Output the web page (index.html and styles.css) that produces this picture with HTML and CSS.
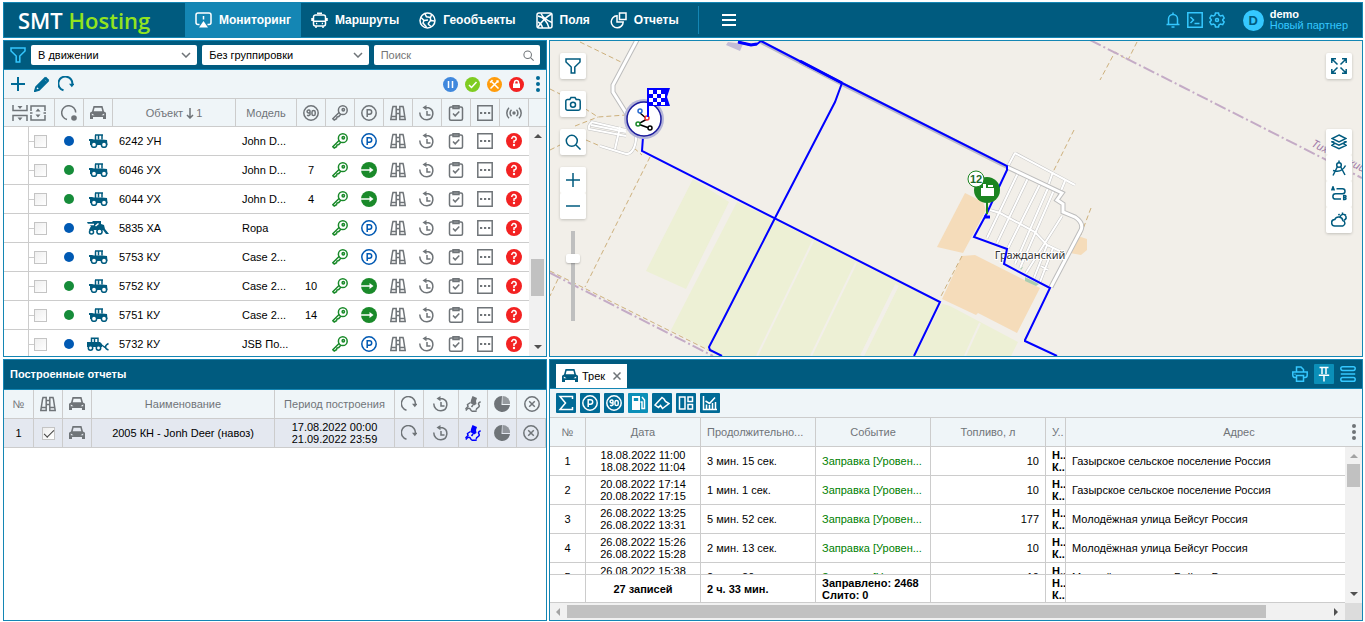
FILE: index.html
```html
<!DOCTYPE html>
<html lang="ru">
<head>
  <meta charset="UTF-8">
  <meta name="viewport" content="width=device-width, initial-scale=1.0">
  <title>SMT Hosting - Мониторинг</title>
  <link rel="stylesheet" href="styles.css">
</head>
<body>
  <svg class="sprite" aria-hidden="true">
    <symbol id="i-monitor" viewBox="0 0 17 17"><path d="M4.500 12.500H3a2 2 0 0 1-2-2V3a2 2 0 0 1 2-2h11a2 2 0 0 1 2 2v7.500a2 2 0 0 1-2 2h-1.500M8.500 4v3.500"/><path class="fill" d="M8.500 9l4.500 6.500H4z"/></symbol>
    <symbol id="i-bus" viewBox="0 0 17 17"><path d="M6 1.200h5M4.500 3h8a2 2 0 0 1 2 2v7a2 2 0 0 1-2 2h-8a2 2 0 0 1-2-2V5a2 2 0 0 1 2-2zM2.500 9.200h12M1 6v3M16 6v3M5 14v2M12 14v2M5 11.600h1.200M10.800 11.600H12"/></symbol>
    <symbol id="i-globe" viewBox="0 0 17 17"><circle cx="8.500" cy="8.500" r="7.500"/><path d="M2 5.500l3 3-1 2.500 3.500 4M5 8.500l4-.5M6 1.800l1.500 3 4 .7 1-2.500M9 12l2.500-3.500 4 .5M11 5.500l1 3M9 12l3 2.500"/></symbol>
    <symbol id="i-field" viewBox="0 0 17 17"><rect x="1" y="1" width="15" height="15" rx="2"/><path d="M2 4c6 1 9 5 11 12M15.500 2C10 5 6 9 2 15M5 1.500c2 4 6 7 11 9M2 10c2 1 4 3 4.500 6"/></symbol>
    <symbol id="i-report" viewBox="0 0 17 17"><path d="M7 3.800A6 6 0 1 0 13.200 10H7z"/><path d="M9.500 1h6.500v6.500H9.500z"/></symbol>
    <symbol id="i-menu" viewBox="0 0 14 14"><path d="M0 2h14M0 7h14M0 12h14"/></symbol>
    <symbol id="i-bell" viewBox="0 0 16 16"><path d="M8 .5v2M1.500 12.500h13M3.500 12.500V7a4.500 4.500 0 0 1 9 0v5.500M6.500 15h3"/></symbol>
    <symbol id="i-term" viewBox="0 0 16 16"><path d="M.8.800h14.400v14.400H.8zM3.500 5l3 3-3 3M7.500 11.500h5"/></symbol>
    <symbol id="i-gear" viewBox="0 0 16 16"><path d="M6.500 1h3l.5 2 1.500 1 2.200-.6 1.500 2.600L13.800 7.500v1l1.400 1.500-1.500 2.600-2.200-.6-1.500 1-.5 2h-3l-.5-2-1.500-1-2.200.6L.8 10l1.400-1.500v-1L.8 6l1.500-2.600 2.200.6 1.500-1z"/><circle cx="8" cy="8" r="1.500"/></symbol>
    <symbol id="i-funnel" viewBox="0 0 16 16"><path d="M1 1h14v3L9.800 9v6H6.200V9L1 4z"/></symbol>
    <symbol id="i-search" viewBox="0 0 16 16"><circle cx="6.800" cy="6.800" r="5.500"/><path d="M11 11l4.500 4.500"/></symbol>
    <symbol id="i-chevron" viewBox="0 0 10 6"><path d="M1 1l4 4 4-4"/></symbol>
    <symbol id="i-plus" viewBox="0 0 16 16"><path d="M8 1v14M1 8h14"/></symbol>
    <symbol id="i-minus" viewBox="0 0 16 16"><path d="M1 8h14"/></symbol>
    <symbol id="i-pencil" viewBox="0 0 16 16"><path d="M1 15l1.200-4L11 2.200 13.800 5 5 13.800zM4 12l7.500-7.500"/><path class="fill" d="M10.500 2.500L12 .8l3.300 3.300-1.700 1.500zM.5 15.500L1.500 12l2.500 2.500z"/></symbol>
    <symbol id="i-refresh" viewBox="0 0 16 16"><path d="M5.500 14.300A7 7 0 1 1 14.300 8.500"/><path class="fill" d="M11 7.800h5.500l-2.700 3.400z"/></symbol>
    <symbol id="i-pause" viewBox="0 0 15 15"><circle class="disc-blue" cx="7.500" cy="7.500" r="7.500"/><path class="on" d="M5.500 4v7M9.500 4v7"/></symbol>
    <symbol id="i-ok" viewBox="0 0 15 15"><circle class="disc-lime" cx="7.500" cy="7.500" r="7.500"/><path class="on" d="M4 8l2.500 2.500L11.500 5"/></symbol>
    <symbol id="i-tools" viewBox="0 0 15 15"><circle class="disc-orange" cx="7.500" cy="7.500" r="7.500"/><path class="on" d="M4 4l7.500 7.500M11.500 3.500L3.500 11.500M3 5.500L5.500 3M9.500 3.500l2 2"/></symbol>
    <symbol id="i-lock" viewBox="0 0 15 15"><circle class="disc-red" cx="7.500" cy="7.500" r="7.500"/><path class="on" d="M5.500 7V5.500a2 2 0 0 1 4 0V7"/><path class="on-fill" d="M4 6.500h7v4.500H4z"/></symbol>
    <symbol id="i-dots" viewBox="0 0 4 16"><circle class="fill" cx="2" cy="2" r="2"/><circle class="fill" cx="2" cy="8" r="2"/><circle class="fill" cx="2" cy="14" r="2"/></symbol>
    <symbol id="i-collapse" viewBox="0 0 16 16"><path d="M1 0v5.500h14V0M1 16v-5.500h14V16"/><path class="fill" d="M5.500 1h5L8 4zM5.500 12.500h5L8 15.500z"/></symbol>
    <symbol id="i-expand" viewBox="0 0 16 16"><path d="M1 6V1h14v5M1 10v5h14v-5M0 8h2.500M13.500 8H16"/><path class="fill" d="M5.500 6.500h5L8 3.500zM5.500 9.500h5L8 12.500z"/></symbol>
    <symbol id="i-state" viewBox="0 0 16 16"><path d="M6 14.500A7 7 0 1 1 14.700 7.500"/><circle class="fill" cx="13" cy="13" r="2.800"/></symbol>
    <symbol id="i-car" viewBox="0 0 16 14"><path class="fill" fill-rule="evenodd" d="M3.500 0h9l1.500 5.500 2 1.300V13h-3v-2H3v2H0V6.800l2-1.300zM4.600 1.700L3.700 5.300h8.600l-.9-3.600zM1.800 7.500v1.800h2.700zM14.200 7.500v1.800h-2.700z"/></symbol>
    <symbol id="i-90" viewBox="0 0 16 16"><circle cx="8" cy="8" r="7.200"/><path d="M7 7a1.500 1.500 0 1 1 0-1v2.500a1.500 1.500 0 0 1-2.700 1.300M9 7a1.600 1.600 0 0 1 3.200 0v2A1.600 1.600 0 0 1 9 9z"/></symbol>
    <symbol id="i-key" viewBox="0 0 16 16"><circle cx="10.800" cy="5.200" r="4.400"/><circle cx="11.300" cy="4.700" r="1.200"/><path d="M7.300 7.200L.8 13.700 2.200 15l2.300-1.300L5 12l1.800-.5L9 9"/></symbol>
    <symbol id="i-park" viewBox="0 0 16 16"><circle cx="8" cy="8" r="7.200"/><path d="M6.200 12V4.800h2.300a2.200 2.200 0 0 1 0 4.400H6.200"/></symbol>
    <symbol id="i-go" viewBox="0 0 16 16"><circle class="fill" cx="8" cy="8" r="8"/><path class="on" d="M0 8h9"/><path class="on-fill" d="M8.500 5L12.500 8l-4 3z"/></symbol>
    <symbol id="i-bino" viewBox="0 0 16 16"><path d="M2.500 3.500L.8 14.500h5.400V1.500H3zM13.500 3.500l1.700 11H9.800V1.500H13zM6.500 4.500h3M6.500 8.500h3M1.500 11.500h4.500M10 11.500h4.500"/></symbol>
    <symbol id="i-history" viewBox="0 0 16 16"><path d="M.8 7.500a7 7 0 0 0 7.200 7.300A6.200 6.200 0 0 0 9.500 2.700H6M8 6v4h3.500"/><path class="fill" d="M7.500 0v5.200L3.500 2.600z"/></symbol>
    <symbol id="i-clip" viewBox="0 0 16 16"><rect x="1.500" y="2" width="13" height="13.200" rx="1.500"/><path d="M5 .8h6v2.700H5zM5 8.500l2.200 2.300L11.300 6.500"/></symbol>
    <symbol id="i-more" viewBox="0 0 16 16"><path d="M.8.800h14.400v14.400H.8z"/><path class="fill" d="M3 7h2.200v2H3zM7 7h2.200v2H7zM11 7h2.200v2H11z"/></symbol>
    <symbol id="i-signal" viewBox="0 0 16 16"><circle class="fill" cx="8" cy="8" r="1.700"/><path d="M5.500 4.700a4.500 4.500 0 0 0 0 6.600M10.500 4.700a4.500 4.500 0 0 1 0 6.600M3 2.700a7.500 7.500 0 0 0 0 10.600M13 2.700a7.500 7.500 0 0 1 0 10.600"/></symbol>
    <symbol id="i-ask" viewBox="0 0 16 16"><circle class="disc-red" cx="8" cy="8" r="8"/><path class="on" d="M5.800 6A2.200 2.200 0 1 1 8 8v2"/><circle class="on-fill" cx="8" cy="12" r="1.200"/></symbol>
    <symbol id="i-tractor" viewBox="0 0 19 14"><path d="M6.500 6V1.200M6 1h8M9.500 1v4.500M13 1v4.500"/><path class="fill" d="M0 5h3l2 .5h8l5 .5.500 5H1V7H0z"/><circle class="hub" cx="5" cy="10.700" r="2.600"/><circle class="hub" cx="15" cy="10.700" r="2.600"/></symbol>
    <symbol id="i-harvester" viewBox="0 0 22 14"><path class="fill" d="M0 1h5l1-1h8v3l3 1 1 4 4 5h-3l-3-4H2l2-4-3-2z"/><path class="on" d="M1 3.500h6M8.500 5l3-2.500"/><circle class="hub" cx="4.500" cy="11" r="2"/><circle class="hub" cx="12.500" cy="10.500" r="2.600"/></symbol>
    <symbol id="i-loader" viewBox="0 0 22 14"><path d="M4.500 6V1.200H11V6M7.500 1v5M14 7.500l4 3M21.500 6.500c-4 2-4 5 0 6.500"/><path class="fill" d="M0 5h13l2 2v3H0z"/><circle class="hub" cx="3.500" cy="11" r="2.200"/><circle class="hub" cx="11.500" cy="11" r="2.200"/></symbol>
    <symbol id="i-track" viewBox="0 0 16 16"><path d="M.8 14.500c2-3 4-3 5-.5s4 1 6 1M11.500 14c-1-2 3-2 2.800-4s-1.500-1.500-.5-3 1.700-.5 1.700-1.500"/><path class="fill" d="M7.500 0l4.500 2-1 3 .5 3-2.500 1.500L5.500 7l.5-3z"/><path d="M5.500 6.500l-3 2 .5 2L.5 13M8 9l-1.500 2"/></symbol>
    <symbol id="i-pie" viewBox="0 0 16 16"><path class="fill" d="M8 0a8 8 0 1 0 8 9H7.500z"/><path class="soft" d="M8.500 0A7.500 7.500 0 0 1 16 8H8.500z"/></symbol>
    <symbol id="i-close" viewBox="0 0 16 16"><circle cx="8" cy="8" r="7.200"/><path d="M5.200 5.200l5.600 5.600M10.800 5.200l-5.600 5.600"/></symbol>
    <symbol id="i-x" viewBox="0 0 8 8"><path d="M.5.500l7 7M7.500.500l-7 7"/></symbol>
    <symbol id="i-camera" viewBox="0 0 16 16"><path d="M2.500 3.500h2.300L6 1.500h4l1.200 2h2.300a1.700 1.700 0 0 1 1.700 1.700v7.300a1.700 1.700 0 0 1-1.700 1.700h-11a1.700 1.700 0 0 1-1.700-1.700V5.200a1.700 1.700 0 0 1 1.700-1.700z"/><circle cx="8" cy="8.700" r="2.500"/></symbol>
    <symbol id="i-full" viewBox="0 0 16 16"><path d="M.8 5V.8H5M11 .8h4.200V5M15.200 11v4.200H11M5 15.200H.8V11M1 1l5.500 5.500M15 1L9.500 6.500M15 15L9.500 9.500M1 15l5.500-5.500"/></symbol>
    <symbol id="i-layers" viewBox="0 0 16 16"><path d="M8 1l7 3.500L8 8 1 4.500zM3.500 6.300L1 7.800l7 3.400 7-3.400-2.500-1.500M3.500 9.700L1 11.300l7 3.400 7-3.400-2.500-1.600"/></symbol>
    <symbol id="i-compass" viewBox="0 0 16 16"><path d="M8 .5V3M6.500 6.500L2 15.500M9.500 6.500L14 15M2 10.500c5 1.500 10 0 12.500-5"/><circle cx="8" cy="5" r="2.300"/></symbol>
    <symbol id="i-route" viewBox="0 0 16 16"><path d="M5.500 2.800h6a2.500 2.500 0 0 1 0 5h-7a2.600 2.600 0 0 0 0 5.200H10"/><path d="M.6 4.500L2 .8l1.400 3.700M1.200 3.500h1.700M12.700 9.500v4h1.300a1 1 0 0 0 0-2h-1.300H14a1 1 0 0 0 0-2z"/></symbol>
    <symbol id="i-weather" viewBox="0 0 16 16"><path d="M4 14a3.200 3.200 0 0 1-.3-6.400 4.300 4.300 0 0 1 8.200 1A2.800 2.800 0 0 1 11.800 14zM9.200 4.500A3 3 0 1 1 13 8.200M7.500 2l1 1.300M11.500.500V2M15 2.500l-1.300 1M15.800 6.500h-1.500"/></symbol>
    <symbol id="i-print" viewBox="0 0 16 16"><path d="M4.500 6V1h4.500L11.500 3.500V6M4.500 11.500H3a2.200 2.200 0 0 1-2.200-2.200V6h14.400v3.300a2.200 2.200 0 0 1-2.200 2.200h-1.500M4.500 9.500h7v5.700h-7zM2.500 8.300h1"/></symbol>
    <symbol id="i-pin" viewBox="0 0 16 16"><path d="M3.500 1.500h9M6 2v6M10 2v6M8 9v6.500M2.800 9.200h10.400"/></symbol>
    <symbol id="i-stack" viewBox="0 0 16 16"><rect x=".8" y=".8" width="14.400" height="3.600" rx="1.800"/><path d="M.8 8h14.400"/><rect x=".8" y="11.600" width="14.400" height="3.600" rx="1.800"/></symbol>
    <symbol id="i-sum" viewBox="0 0 16 16"><path d="M14.500 4V1.500H2L7.500 8 2 14.500h12.500V12"/></symbol>
    <symbol id="i-fuel" viewBox="0 0 16 16"><path class="on-fill" fill-rule="evenodd" d="M2 1h8v14H2zM3.800 3v3h4.400V3z"/><path d="M10.500 7h1.500v6.500h2.500V5L12 2"/></symbol>
    <symbol id="i-area" viewBox="0 0 16 16"><path d="M1 10l7-7.500 2 1.500 1.500 2.500L15 8.500l-6.500 5-2-3-2 2z"/></symbol>
    <symbol id="i-panes" viewBox="0 0 16 16"><path d="M1.500 2h5.500v12H1.500zM10 2h4.500v4.500H10zM10 9.500h4.500V14H10z"/></symbol>
    <symbol id="i-chart" viewBox="0 0 16 16"><path d="M1.500 1v13.500H15M4.500 14V9.500M7.500 14v-4M10.500 14V8M13.500 14V7M3.500 6l4 2.500L13 2.500"/></symbol>
    <symbol id="i-sort" viewBox="0 0 8 11"><path d="M4 0v10M1 7l3 3 3-3"/></symbol>
  </svg>

  <header class="topbar">
    <a class="logo" href="#">SMT <span>Hosting</span></a>
    <nav class="nav">
      <a class="active" href="#"><svg><use href="#i-monitor"/></svg>Мониторинг</a>
      <a href="#"><svg><use href="#i-bus"/></svg>Маршруты</a>
      <a href="#"><svg><use href="#i-globe"/></svg>Геообъекты</a>
      <a href="#"><svg><use href="#i-field"/></svg>Поля</a>
      <a href="#"><svg><use href="#i-report"/></svg>Отчеты</a>
    </nav>
    <button class="menu" type="button" aria-label="Меню"><svg><use href="#i-menu"/></svg></button>
    <div class="account">
      <button type="button" aria-label="Уведомления"><svg><use href="#i-bell"/></svg></button>
      <button type="button" aria-label="Консоль"><svg><use href="#i-term"/></svg></button>
      <button type="button" aria-label="Настройки"><svg><use href="#i-gear"/></svg></button>
      <span class="avatar">D</span>
      <div class="user"><b>demo</b><a href="#">Новый партнер</a></div>
    </div>
  </header>

  <main class="layout">
    <section class="panel">
      <div class="filters">
        <svg class="icon"><use href="#i-funnel"/></svg>
        <label class="field">
          <select aria-label="Фильтр"><option>В движении</option></select>
          <svg class="chevron"><use href="#i-chevron"/></svg>
        </label>
        <label class="field">
          <select aria-label="Группировка"><option>Без группировки</option></select>
          <svg class="chevron"><use href="#i-chevron"/></svg>
        </label>
        <label class="field">
          <input type="text" placeholder="Поиск" aria-label="Поиск">
          <svg class="lens"><use href="#i-search"/></svg>
        </label>
      </div>
      <div class="tools">
        <button type="button" aria-label="Добавить"><svg class="icon"><use href="#i-plus"/></svg></button>
        <button type="button" aria-label="Изменить"><svg class="icon"><use href="#i-pencil"/></svg></button>
        <button type="button" aria-label="Обновить"><svg class="icon"><use href="#i-refresh"/></svg></button>
        <div class="states">
          <button type="button" aria-label="Пауза"><svg><use href="#i-pause"/></svg></button>
          <button type="button" aria-label="В работе"><svg><use href="#i-ok"/></svg></button>
          <button type="button" aria-label="Ремонт"><svg><use href="#i-tools"/></svg></button>
          <button type="button" aria-label="Заблокированы"><svg><use href="#i-lock"/></svg></button>
        </div>
        <button type="button" aria-label="Ещё"><svg class="dots"><use href="#i-dots"/></svg></button>
      </div>
      <table class="grid objects-head">
        <thead>
          <tr>
            <th class="w-tree"><div class="pair"><svg class="icon"><use href="#i-collapse"/></svg><svg class="icon"><use href="#i-expand"/></svg></div></th>
            <th class="w-icon"><svg class="icon"><use href="#i-state"/></svg></th>
            <th class="w-icon"><svg class="car"><use href="#i-car"/></svg></th>
            <th>Объект <svg class="sort"><use href="#i-sort"/></svg>1</th>
            <th class="w-model">Модель</th>
            <th class="w-icon"><svg class="icon"><use href="#i-90"/></svg></th>
            <th class="w-icon"><svg class="icon"><use href="#i-key"/></svg></th>
            <th class="w-icon"><svg class="icon"><use href="#i-park"/></svg></th>
            <th class="w-icon"><svg class="icon"><use href="#i-bino"/></svg></th>
            <th class="w-icon"><svg class="icon"><use href="#i-history"/></svg></th>
            <th class="w-icon"><svg class="icon"><use href="#i-clip"/></svg></th>
            <th class="w-icon"><svg class="icon"><use href="#i-more"/></svg></th>
            <th class="w-icon"><svg class="icon"><use href="#i-signal"/></svg></th>
            <th class="w-scroll"></th>
          </tr>
        </thead>
      </table>
      <div class="scroll-area">
        <div class="view">
          <table class="grid objects">
            <colgroup>
              <col class="w-tree"><col class="w-icon"><col class="w-icon"><col><col class="w-model">
              <col class="w-icon"><col class="w-icon"><col class="w-icon"><col class="w-icon">
              <col class="w-icon"><col class="w-icon"><col class="w-icon"><col class="w-icon">
            </colgroup>
            <tbody id="objects"></tbody>
          </table>
        </div>
        <div class="vscroll"><i class="up"></i><div class="rail"><div class="thumb thumb-objects"></div></div><i class="down"></i></div>
      </div>
    </section>

    <section class="panel map">
      <svg class="canvas" viewBox="0 1 812 315" preserveAspectRatio="xMinYMin slice">
        <!-- fields -->
        <g class="green">
          <path d="M143 139L179 162 136 249 96 231z"/>
          <path d="M187 162L225 180 390 263 400 266 468 302 461 316H166L157 309 121 290z"/>
        </g>
        <path class="gap" d="M263 201L207 316M306 223L261 316M392 262L364 316M430 283L415 316"/>
        <path class="gap wide" d="M347 245L312 316"/>
        <g class="orange">
          <path d="M415 153L433 162 436 170 413 213 387 207z"/>
          <path d="M412 216L425 215 490 248 467 293 428 273 426 275 392 259z"/>
          <path d="M528 196L537 199V210L531 215 520 213z"/>
        </g>
        <path class="park" d="M475 237L489 244 486 246 475 241zM469 226l4 1-2 3z"/>
        <path class="depot" d="M178 2L193 4 190 11 176 5z"/>
        <!-- dirt roads and district border -->
        <path class="dirt" d="M30 2L73 23M0 49L20 59 48 77 76 75M25 86L48 77M36 100L50 106M100 117L35 247M8 239L0 256M0 110L30 95M84 108L92 115M587 2L578 20 565 12 550 40M524 90L503 132M541 168L530 197M412 216L390 258M0 231L162 312"/>
        <path class="border" d="M540 0L812 138M0 233L163 316"/>
        <!-- roads -->
        <path class="casing" d="M87 0L63 45V52L78 76"/>
        <path class="surface" d="M87 0L63 45V52L78 76"/>
        <path class="casing thin" d="M76 90L42 82Q38 85 39 89L76 96M41 85L76 92M70 87L65 109M50 106L76 114Q84 114 86 100V90M465 113L525 145M465 113L457 128M503 132L498 146M515 141L508 158M468 133L437 198M478 138L447 203M490 144L458 208M498 148L465 224M504 150L470 228M512 176L476 233M440 170L450 173 485 192 497 205 514 213M497 205L484 238M491 226L498 230M503 208L490 242"/>
        <path class="surface thin" d="M76 90L42 82Q38 85 39 89L76 96M41 85L76 92M70 87L65 109M50 106L76 114Q84 114 86 100V90M465 113L525 145M465 113L457 128M503 132L498 146M515 141L508 158M468 133L437 198M478 138L447 203M490 144L458 208M498 148L465 224M504 150L470 228M512 176L476 233M440 170L450 173 485 192 497 205 514 213M497 205L484 238M491 226L498 230M503 208L490 242"/>
        <path class="casing" d="M457 127L512 153 507 160 513 164V172L525 177Q534 183 531 190L501 247"/>
        <path class="surface" d="M457 127L512 153 507 160 513 164V172L525 177Q534 183 531 190L501 247"/>
        <text class="town" x="480" y="219">Гражданский</text>
        <text class="district" transform="translate(761 106) rotate(27)">Тихорецкий,</text>
        <!-- vehicle track -->
        <path class="shadow" d="M211 2L292 44 457 127"/>
        <path class="way" d="M93 97L92 111 390 262 364 316M292 43L285 62 225 178 173 280 159 307 160 310 172 316"/>
        <path class="way" d="M188 2L201 5 207 4 211 1 292 43 457 126V130L449 147 437 173 424 197 457 209 454 224 500 248 475 300V301L507 316"/>
        <path class="way heavy" d="M250 21L292 43M188 2L201 5 207 4"/>
        <!-- start / finish -->
        <circle class="halo" cx="94" cy="79" r="20"/>
        <circle class="node" cx="94" cy="79" r="17"/>
        <path class="links" d="M90 73L97 79 88 84 99 88"/>
        <circle class="dot-blue" cx="90" cy="71" r="2"/><circle class="dot-red" cx="97" cy="78" r="2"/><circle class="dot-green" cx="88" cy="84" r="2"/><circle class="dot-black" cx="100" cy="88" r="2"/>
        <path class="flag" d="M97 48h23l-3 9 3 9H99v11h-2z"/>
        <path class="checks" d="M99 50h4v4h-4zM107 50h4v4h-4zM103 54h4v4h-4zM111 54h4v4h-4zM99 58h4v4h-4zM107 58h4v4h-4zM103 62h4v3h-4zM111 62h4v3h-4z"/>
        <!-- fuel stop -->
        <path class="way heavy" d="M434 177h6"/>
        <path class="stem" d="M437 160v14"/>
        <circle class="stop" cx="437" cy="150" r="13"/>
        <path class="on-fill" d="M431 148h13v8h-13zM433 144h3v4h-3zM438 145h5v2h-5z"/>
        <circle class="badge" cx="426" cy="139" r="8"/>
        <text class="badge-text" x="426" y="143">12</text>
      </svg>
      <div class="map-left">
        <button type="button" aria-label="Фильтр"><svg><use href="#i-funnel"/></svg></button>
        <button type="button" aria-label="Снимок"><svg><use href="#i-camera"/></svg></button>
        <button type="button" aria-label="Поиск на карте"><svg><use href="#i-search"/></svg></button>
        <div class="stacked">
          <button type="button" aria-label="Приблизить"><svg><use href="#i-plus"/></svg></button>
          <button type="button" aria-label="Отдалить"><svg><use href="#i-minus"/></svg></button>
        </div>
        <input class="zoom" type="range" min="0" max="100" value="72" aria-label="Масштаб">
      </div>
      <div class="map-right">
        <button type="button" aria-label="На весь экран"><svg><use href="#i-full"/></svg></button>
        <div class="stacked">
          <button type="button" aria-label="Слои"><svg><use href="#i-layers"/></svg></button>
          <button type="button" aria-label="Измерения"><svg><use href="#i-compass"/></svg></button>
          <button type="button" aria-label="Маршрут"><svg><use href="#i-route"/></svg></button>
          <button type="button" aria-label="Погода"><svg><use href="#i-weather"/></svg></button>
        </div>
      </div>
    </section>

    <section class="panel">
      <h2 class="title">Построенные отчеты</h2>
      <table class="grid reports">
        <thead>
          <tr>
            <th class="w-num">№</th>
            <th class="w-icon"><svg class="icon"><use href="#i-bino"/></svg></th>
            <th class="w-icon"><svg class="car"><use href="#i-car"/></svg></th>
            <th>Наименование</th>
            <th class="w-period">Период построения</th>
            <th class="w-icon"><svg class="icon"><use href="#i-refresh"/></svg></th>
            <th class="w-hist"><svg class="icon"><use href="#i-history"/></svg></th>
            <th class="w-icon"><svg class="icon"><use href="#i-track"/></svg></th>
            <th class="w-icon"><svg class="icon"><use href="#i-pie"/></svg></th>
            <th class="w-icon"><svg class="icon"><use href="#i-close"/></svg></th>
          </tr>
        </thead>
        <tbody>
          <tr>
            <td>1</td>
            <td><input class="check" type="checkbox" checked aria-label="Показать отчет"></td>
            <td><svg class="car"><use href="#i-car"/></svg></td>
            <td>2005 КН - Jonh Deer (навоз)</td>
            <td>17.08.2022 00:00<br>21.09.2022 23:59</td>
            <td><svg class="icon"><use href="#i-refresh"/></svg></td>
            <td><svg class="icon"><use href="#i-history"/></svg></td>
            <td><svg class="icon bright"><use href="#i-track"/></svg></td>
            <td><svg class="icon"><use href="#i-pie"/></svg></td>
            <td><svg class="icon"><use href="#i-close"/></svg></td>
          </tr>
        </tbody>
      </table>
    </section>

    <section class="panel">
      <div class="tabs">
        <div class="tab"><svg class="car"><use href="#i-car"/></svg><span>Трек</span><button type="button" aria-label="Закрыть"><svg><use href="#i-x"/></svg></button></div>
        <div class="tab-tools">
          <button type="button" aria-label="Печать"><svg class="icon"><use href="#i-print"/></svg></button>
          <button class="pressed" type="button" aria-label="Закрепить"><svg class="icon"><use href="#i-pin"/></svg></button>
          <button type="button" aria-label="Вид"><svg class="icon"><use href="#i-stack"/></svg></button>
        </div>
      </div>
      <div class="track-tools">
        <button type="button" aria-label="Итоги"><svg class="icon"><use href="#i-sum"/></svg></button>
        <button type="button" aria-label="Стоянки"><svg class="icon"><use href="#i-park"/></svg></button>
        <button type="button" aria-label="Скорость"><svg class="icon"><use href="#i-90"/></svg></button>
        <button class="pressed" type="button" aria-label="Топливо"><svg class="icon"><use href="#i-fuel"/></svg></button>
        <button type="button" aria-label="Геообъекты"><svg class="icon"><use href="#i-area"/></svg></button>
        <button type="button" aria-label="Панели"><svg class="icon"><use href="#i-panes"/></svg></button>
        <button type="button" aria-label="Графики"><svg class="icon"><use href="#i-chart"/></svg></button>
      </div>
      <table class="grid track-head">
        <thead>
          <tr>
            <th class="w-no">№</th><th class="w-col">Дата</th><th class="w-col cut">Продолжительно...</th><th class="w-col">Событие</th><th class="w-col">Топливо, л</th><th class="w-place">У..</th>
            <th class="address">Адрес<svg class="dots"><use href="#i-dots"/></svg></th>
          </tr>
        </thead>
      </table>
      <div class="scroll-area">
        <div class="stack">
          <div class="view">
            <table class="grid track">
              <colgroup><col class="w-no"><col class="w-col"><col class="w-col"><col class="w-col"><col class="w-col"><col class="w-place"><col></colgroup>
              <tbody id="events"></tbody>
            </table>
          </div>
          <table class="grid track summary">
            <colgroup><col class="w-no"><col class="w-col"><col class="w-col"><col class="w-col"><col class="w-col"><col class="w-place"><col></colgroup>
            <tbody>
              <tr><td></td><td>27 записей</td><td>2 ч. 33 мин.</td><td>Заправлено: 2468<br>Слито: 0</td><td></td><td>Н..<br>К..</td><td></td></tr>
            </tbody>
          </table>
        </div>
        <div class="vscroll"><i class="up off"></i><div class="rail"><div class="thumb thumb-events"></div></div><i class="down"></i></div>
      </div>
      <div class="hscroll"><i class="left"></i><div class="rail"><div class="thumb"></div></div><i class="right"></i><span class="corner"></span></div>
    </section>
  </main>

  <script>
    // [name, model, speed, moving, vehicle icon]
    const objects = [
      ['6242 УН', 'John D...', '', false, 'tractor'],
      ['6046 УХ', 'John D...', 7, true, 'tractor'],
      ['6044 УХ', 'John D...', 4, true, 'tractor'],
      ['5835 ХА', 'Ropa', '', false, 'harvester'],
      ['5753 КУ', 'Case 2...', '', false, 'tractor'],
      ['5752 КУ', 'Case 2...', 10, true, 'tractor'],
      ['5751 КУ', 'Case 2...', 14, true, 'tractor'],
      ['5732 КУ', 'JSB По...', '', false, 'loader']
    ];

    const events = [
      ['18.08.2022 11:00', '18.08.2022 11:04', '3 мин. 15 сек.', 10, 'Газырское сельское поселение Россия'],
      ['20.08.2022 17:14', '20.08.2022 17:15', '1 мин. 1 сек.', 10, 'Газырское сельское поселение Россия'],
      ['26.08.2022 13:25', '26.08.2022 13:31', '5 мин. 52 сек.', 177, 'Молодёжная улица Бейсуг Россия'],
      ['26.08.2022 15:26', '26.08.2022 15:28', '2 мин. 13 сек.', 10, 'Молодёжная улица Бейсуг Россия'],
      ['26.08.2022 15:38', '26.08.2022 15:40', '2 мин. 20 сек.', 10, 'Молодёжная улица Бейсуг Россия']
    ];

    const icon = (name, cls = '') => `<svg class="icon ${cls}"><use href="#i-${name}"/></svg>`;

    document.getElementById('objects').innerHTML = objects.map(([name, model, speed, moving, kind]) => `
      <tr>
        <td class="tree"><input class="check" type="checkbox" aria-label="${name}"></td>
        <td><span class="state ${moving ? 'moving' : ''}"></span></td>
        <td>${icon(kind, 'vehicle ' + kind)}</td>
        <td>${name}</td>
        <td>${model}</td>
        <td class="center">${speed}</td>
        <td>${icon('key', 'key')}</td>
        <td>${moving ? icon('go', 'go') : icon('park', 'park-on')}</td>
        <td>${icon('bino')}</td>
        <td>${icon('history')}</td>
        <td>${icon('clip')}</td>
        <td>${icon('more')}</td>
        <td>${icon('ask')}</td>
      </tr>`).join('');

    document.getElementById('events').innerHTML = events.map(([from, to, time, fuel, address], i) => `
      <tr>
        <td>${i + 1}</td>
        <td>${from}<br>${to}</td>
        <td>${time}</td>
        <td><span class="refuel">Заправка [Уровен...</span></td>
        <td>${fuel}</td>
        <td>Н..<br>К..</td>
        <td>${address}</td>
      </tr>`).join('');
  </script>
</body>
</html>
```
FILE: styles.css
```css
* {
  box-sizing: border-box;
}
html, body {
  height: 100%;
}
body {
  margin: 0;
  padding: 2px 2px 1px 3px;
  display: flex;
  flex-direction: column;
  gap: 2px;
  background: #fff;
  color: #000;
  font: 11px/12px "Liberation Sans", Arial, sans-serif;
}
button {
  display: block;
  padding: 0;
  border: 0;
  background: none;
  color: inherit;
  cursor: pointer;
}
a {
  color: inherit;
  text-decoration: none;
}

/* icons */
.sprite {
  position: absolute;
  width: 0;
  height: 0;
}
svg {
  display: block;
  flex: none;
  fill: none;
  stroke: currentColor;
  stroke-width: 1.5;
}
.icon {
  width: 16px;
  height: 16px;
}
.fill {
  fill: currentColor;
  stroke: none;
}
.soft {
  fill: currentColor;
  opacity: .7;
  stroke: none;
}
.on {
  stroke: #fff;
}
.on-fill {
  fill: #fff;
  stroke: none;
}
.hub {
  fill: #fff;
  stroke: currentColor;
}
.disc-blue {
  fill: #4088dd;
  stroke: none;
}
.disc-lime {
  fill: #7fcc22;
  stroke: none;
}
.disc-orange {
  fill: #ff9c0c;
  stroke: none;
}
.disc-red {
  fill: #f32222;
  stroke: none;
}
.car {
  width: 16px;
  height: 14px;
}
.dots {
  width: 4px;
  height: 16px;
}

/* top bar */
.topbar {
  flex: none;
  height: 36px;
  display: flex;
  align-items: stretch;
  background: #005b7f;
  border: 1px solid #1486b4;
  color: #fff;
}
.logo {
  width: 181px;
  padding-left: 14px;
  font: 600 22px/35px "Open Sans", "Noto Sans", sans-serif;
  white-space: nowrap;
}
.logo span {
  color: #92e41e;
}
.nav {
  display: flex;
  font-size: 12px;
  font-weight: bold;
}
.nav a {
  display: flex;
  align-items: center;
  gap: 7px;
  padding: 0 10px;
}
.nav svg {
  width: 17px;
  height: 17px;
}
.nav .active {
  background: #1486b4;
}
.menu {
  margin: 3px 0 3px 9px;
  padding-left: 23px;
  border-left: 1px solid #1486b4;
}
.menu svg {
  width: 14px;
  height: 14px;
  stroke-width: 2;
}
.account {
  margin-left: auto;
  padding-right: 14px;
  display: flex;
  align-items: center;
  gap: 6px;
  color: #35c8ff;
}
.account svg {
  width: 16px;
  height: 16px;
}
.avatar {
  width: 21px;
  height: 21px;
  margin-left: 12px;
  border-radius: 50%;
  background: #35c8ff;
  color: #005b7f;
  font: bold 13px/21px "Liberation Sans", Arial, sans-serif;
  text-align: center;
}
.user {
  line-height: 11px;
}
.user b {
  display: block;
  color: #fff;
}

.layout {
  flex: 1;
  min-height: 0;
  display: grid;
  grid-template-columns: 40% minmax(0, 1fr);
  grid-template-rows: minmax(0, 1fr) 262px;
  gap: 2px;
}
.panel {
  display: flex;
  flex-direction: column;
  min-width: 0;
  min-height: 0;
  overflow: hidden;
  border: 1px solid #1486b4;
}

/* filters over the object list */
.filters {
  flex: none;
  height: 29px;
  padding: 0 6px;
  display: flex;
  align-items: center;
  gap: 5px;
  background: #005b7f;
  border-bottom: 1px solid #1486b4;
}
.filters > .icon {
  color: #35c8ff;
}
.field {
  position: relative;
  flex: 1;
}
.field select, .field input {
  display: block;
  width: 100%;
  height: 20px;
  padding: 0 7px;
  border: 0;
  border-radius: 2px;
  background: #fff;
  color: #000;
  font: inherit;
  appearance: none;
}
.field input::placeholder {
  color: #757575;
}
.field svg {
  position: absolute;
  right: 6px;
  color: #6f7478;
  pointer-events: none;
}
.chevron {
  top: 7px;
  width: 10px;
  height: 6px;
}
.lens {
  top: 5px;
  width: 11px;
  height: 11px;
}
.tools {
  flex: none;
  height: 29px;
  padding: 0 6px;
  display: flex;
  align-items: center;
  gap: 8px;
  background: #eff5f8;
  border-bottom: 1px solid #ccc;
  color: #006a96;
}
.tools .icon {
  stroke-width: 2;
}
.states {
  display: flex;
  gap: 7px;
  margin-left: auto;
}
.states svg {
  width: 15px;
  height: 15px;
}
.states + button {
  margin-left: 4px;
}

/* tables */
.grid {
  flex: none;
  width: 100%;
  table-layout: fixed;
  border-collapse: separate;
  border-spacing: 0;
}
.grid th, .grid td {
  height: 29px;
  padding: 0 6px;
  border-bottom: 1px solid #ccc;
  white-space: nowrap;
  overflow: hidden;
}
.grid th {
  padding: 0;
  border-right: 1px solid #ccc;
  background: #eff5f8;
  color: #6f7478;
  font-weight: normal;
  text-align: center;
}
.grid th:last-child {
  border-right: 0;
}
.grid svg {
  margin: 0 auto;
  color: #6f7478;
}
.w-tree { width: 51px; }
.w-icon { width: 29px; }
.w-model { width: 61px; }
.w-scroll { width: 17px; }
.w-num { width: 30px; }
.w-period { width: 120px; }
.w-hist { width: 35px; }
.w-no { width: 36px; }
.w-col { width: 115px; }
.w-place { width: 20px; }

.objects-head th {
  height: 28px;
}
.pair {
  display: flex;
  justify-content: center;
  gap: 2px;
}
.grid .pair svg {
  margin: 0;
}
.grid .sort {
  display: inline-block;
  width: 8px;
  height: 11px;
  margin-right: 2px;
  vertical-align: -2px;
}
.objects td:has(svg), .objects .center, .objects td:nth-child(2) {
  padding: 0 1px 0 0;
  text-align: center;
}
.objects .tree {
  padding: 0 0 0 30px;
  background: linear-gradient(#ccc, #ccc) 24px 0 / 1px 100% no-repeat, linear-gradient(#ccc, #ccc) 24px 14px / 6px 1px no-repeat;
}
.check {
  display: block;
  width: 13px;
  height: 13px;
  margin: 0;
  appearance: none;
  border: 1px solid #c4c4c4;
  background: linear-gradient(135deg, #eee, #fff);
}
.check:checked::after {
  content: "";
  display: block;
  width: 9px;
  height: 4px;
  margin: 2px 1px;
  border: solid #444;
  border-width: 0 0 1px 1px;
  transform: rotate(-45deg);
}
.state {
  display: block;
  width: 10px;
  height: 10px;
  margin: 0 auto;
  border-radius: 50%;
  background: #0059b3;
}
.state.moving {
  background: #168c3a;
}
.grid .vehicle {
  width: 19px;
  height: 14px;
  color: #005b7f;
}
.grid .harvester, .grid .loader {
  width: 22px;
}
.grid .key, .grid .go {
  color: #1a8a2a;
}
.grid .park-on {
  color: #0059b3;
}
.scroll-area {
  flex: 1;
  min-height: 0;
  display: flex;
}
.view {
  flex: 1;
  min-height: 0;
  overflow: hidden;
}

/* scrollbars */
.vscroll {
  flex: none;
  width: 17px;
  display: flex;
  flex-direction: column;
  align-items: center;
  padding: 7px 0;
  gap: 6px;
  background: #f1f1f1;
}
.vscroll i, .hscroll i {
  border: 4px solid transparent;
}
.vscroll .up {
  border-top: 0;
  border-bottom-color: #505050;
}
.vscroll .down {
  border-bottom: 0;
  border-top-color: #505050;
}
.vscroll .off {
  border-bottom-color: #a3a3a3;
}
.rail {
  flex: 1;
}
.thumb {
  background: #c1c1c1;
}
.vscroll .thumb {
  width: 13px;
}
.vscroll .rail {
  display: flex;
  flex-direction: column;
}
.thumb-objects {
  flex: 0 0 19%;
  margin-top: auto;
}
.thumb-objects::after {
  content: "";
}
.rail:has(.thumb-objects)::after {
  content: "";
  flex: 0 0 22%;
}
.thumb-events {
  flex: 0 0 19%;
}
.hscroll {
  flex: none;
  height: 17px;
  display: flex;
  align-items: center;
  gap: 7px;
  padding-left: 6px;
  background: #f1f1f1;
}
.hscroll .left {
  border-left: 0;
  border-right-color: #a3a3a3;
}
.hscroll .right {
  border-right: 0;
  border-left-color: #505050;
}
.hscroll .thumb {
  width: 92%;
  height: 13px;
}
.corner {
  width: 17px;
  height: 17px;
  background: #dcdcdc;
}

/* map */
.map {
  position: relative;
  background: #f2efe9;
}
.canvas {
  width: 100%;
  height: 100%;
  stroke: none;
}
.green {
  fill: #edf0d5;
}
.orange {
  fill: #f5dcba;
}
.park {
  fill: #aaccb0;
}
.depot {
  fill: #c3bcd6;
}
.gap {
  stroke: #f2efe9;
  stroke-width: 2;
}
.gap.wide {
  stroke-width: 4;
}
.dirt {
  stroke: #cdb07c;
  stroke-width: 1;
  stroke-dasharray: 5 3;
}
.border {
  stroke: #c4abc6;
  stroke-width: 2;
  stroke-dasharray: 12 3 2 3;
}
.casing {
  stroke: #bdbdbd;
  stroke-width: 5;
}
.surface {
  stroke: #fff;
  stroke-width: 3;
}
.casing.thin {
  stroke: #c4c4c4;
  stroke-width: 3;
}
.surface.thin {
  stroke-width: 2;
}
.town {
  fill: #333;
  stroke: #fff;
  stroke-width: 2;
  paint-order: stroke;
  font: 11px "Noto Sans", sans-serif;
  text-anchor: middle;
}
.district {
  fill: #a07aa8;
  font: italic 11px "Noto Sans", sans-serif;
}
.shadow {
  stroke: #b9b9c9;
  stroke-width: 4;
}
.way {
  stroke: #00f;
  stroke-width: 2;
}
.way.heavy {
  stroke-width: 3;
}
.halo {
  fill: #b5b5d8;
}
.node {
  fill: #fff;
  stroke: #1b1b9c;
  stroke-width: 1.5;
}
.links {
  stroke: #000;
  stroke-width: 1.5;
}
.dot-blue {
  fill: #fff;
  stroke: #2a6cd0;
}
.dot-red {
  fill: #fff;
  stroke: #e33;
}
.dot-green {
  fill: #fff;
  stroke: #1a8a2a;
}
.dot-black {
  fill: #fff;
  stroke: #000;
}
.flag {
  fill: #00f;
}
.checks {
  fill: #fff;
}
.stem {
  stroke: #1b8420;
  stroke-width: 2;
}
.stop {
  fill: #1b8420;
}
.badge {
  fill: #fff;
  stroke: #1b8420;
  stroke-width: 1;
}
.badge-text {
  fill: #1b6a2a;
  font: bold 11px "Liberation Sans", Arial, sans-serif;
  text-anchor: middle;
}
.map-left, .map-right {
  position: absolute;
  top: 12px;
  display: flex;
  flex-direction: column;
  align-items: center;
  gap: 12px;
  color: #005b7f;
}
.map-left {
  left: 10px;
}
.map-right {
  right: 10px;
  gap: 50px;
}
.map button {
  width: 26px;
  height: 26px;
  padding: 5px;
  border-radius: 2px;
  background: #fff;
}
.map button svg {
  width: 16px;
  height: 16px;
}
.map-left > button, .map-right > button, .stacked {
  border-radius: 2px;
  box-shadow: 0 1px 3px rgba(0, 0, 0, .2);
}
.zoom {
  width: 14px;
  height: 90px;
  margin: 0;
  appearance: none;
  writing-mode: vertical-lr;
  direction: rtl;
  background: linear-gradient(#bfbfbf, #bfbfbf) center / 4px 100% no-repeat;
}
.zoom::-webkit-slider-thumb {
  appearance: none;
  width: 14px;
  height: 9px;
  border-radius: 2px;
  background: #fff;
  box-shadow: 0 1px 2px rgba(0, 0, 0, .25);
}

/* reports */
.title {
  flex: none;
  height: 30px;
  margin: 0;
  padding-left: 6px;
  background: #005b7f;
  border-bottom: 1px solid #1486b4;
  color: #fff;
  font-size: 11px;
  line-height: 29px;
}
.reports td {
  padding: 0;
  border-right: 1px solid #ccc;
  background: #e4e8f0;
  text-align: center;
}
.reports .check {
  margin: 0 auto;
}
.reports .bright {
  color: #00f;
}

/* track */
.tabs {
  flex: none;
  height: 29px;
  padding: 0 6px;
  display: flex;
  align-items: flex-end;
  background: #005b7f;
  border-bottom: 1px solid #1486b4;
}
.tab {
  height: 24px;
  padding: 0 6px;
  display: flex;
  align-items: center;
  gap: 4px;
  background: #fff;
}
.tab .car {
  color: #005b7f;
}
.tab button {
  margin-left: 4px;
  color: #6f7478;
}
.tab button svg {
  width: 8px;
  height: 8px;
}
.tab-tools {
  margin-left: auto;
  align-self: center;
  display: flex;
  align-items: center;
  gap: 6px;
  color: #35c8ff;
}
.track-tools {
  flex: none;
  height: 29px;
  padding: 0 6px;
  display: flex;
  align-items: center;
  gap: 4px;
  background: #eff5f8;
  border-bottom: 1px solid #ccc;
}
.track-tools button, .pressed {
  padding: 2px;
  border-radius: 1px;
  background: #006a96;
  color: #fff;
}
.tabs .pressed, .track-tools .pressed {
  background: #0b8fb8;
}
.track-head .cut {
  padding-left: 6px;
  text-align: left;
}
.track-head .address {
  position: relative;
  padding-left: 50px;
}
.address .dots {
  position: absolute;
  top: 6px;
  right: 6px;
}
.track td {
  border-right: 1px solid #ccc;
}
.track td:last-child {
  border-right: 0;
}
.track td:nth-child(1), .track td:nth-child(2) {
  padding: 0;
  text-align: center;
}
.track td:nth-child(5) {
  text-align: right;
}
.track td:nth-child(6), .track-head .w-place {
  padding: 0 0 0 6px;
  text-align: left;
}
.track td:nth-child(6) {
  font-weight: bold;
}
.refuel {
  color: #008000;
}
.stack {
  flex: 1;
  min-width: 0;
  display: flex;
  flex-direction: column;
}
.summary {
  border-top: 1px solid #ccc;
}
.summary td {
  height: 28px;
  font-weight: bold;
}
```
